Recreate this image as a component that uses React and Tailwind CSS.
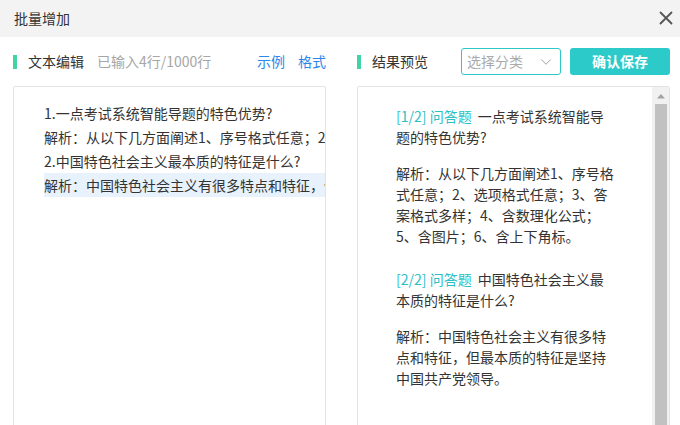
import { ChevronDown } from 'lucide-react';

const font = { fontFamily: '"Noto Sans CJK SC", "Microsoft YaHei", sans-serif' };

const leftLines = [
    '1.一点考试系统智能导题的特色优势?',
    '解析：从以下几方面阐述1、序号格式任意；2、选项格式任意；3、答案格式多样；4、含数理化公式；',
    '2.中国特色社会主义最本质的特征是什么?',
    '解析：中国特色社会主义有很多特点和特征，但最本质的特征是坚持中国共产党领导。',
];

const preview = [
    {
        tag: '[1/2] 问答题',
        title: '一点考试系统智能导题的特色优势?',
        answer: '解析：从以下几方面阐述1、序号格式任意；2、选项格式任意；3、答案格式多样；4、含数理化公式；5、含图片；6、含上下角标。',
    },
    {
        tag: '[2/2] 问答题',
        title: '中国特色社会主义最本质的特征是什么?',
        answer: '解析：中国特色社会主义有很多特点和特征，但最本质的特征是坚持中国共产党领导。',
    },
];

function SectionTitle({ children }) {
    return (
        <div className="flex items-center">
            <span className="h-[14px] w-[4px] bg-[#3fd3a6]" />
            <span className="ml-[11px] text-[14px] text-[#333]">{children}</span>
        </div>
    );
}

export default function App() {
    return (
        <div className="h-[425px] w-[680px] overflow-hidden bg-white" style={font}>
            <div className="flex h-[37px] items-center justify-between bg-[#f3f3f3] pl-[14px] pr-[7px]">
                <span className="text-[14px] text-[#333]">批量增加</span>
                <svg width="14" height="14" viewBox="0 0 14 14" className="mt-[-1px]">
                    <path d="M1.5 1.5 L12.5 12.5 M12.5 1.5 L1.5 12.5" stroke="#555" strokeWidth="1.8" strokeLinecap="round" />
                </svg>
            </div>

            <div className="flex gap-[31px] pl-[13px]">
                <div className="w-[313px]">
                    <div className="mt-[11px] flex h-[27px] items-center">
                        <SectionTitle>文本编辑</SectionTitle>
                        <span className="ml-[13px] text-[14px] text-[#a6a6a6]">已输入4行/1000行</span>
                        <span className="ml-auto text-[14px] text-[#2b87e8]">示例</span>
                        <span className="ml-[13px] text-[14px] text-[#2b87e8]">格式</span>
                    </div>
                    <div className="mt-[11px] h-[360px] overflow-hidden rounded-[2px] border border-[#e3e3e3] pl-[30px] pt-[14px]">
                        {leftLines.map((line, i) => (
                            <div
                                key={i}
                                className={`h-[24px] overflow-hidden whitespace-nowrap text-[14px] leading-[24px] text-[#333] ${i === 3 ? 'bg-[#e8f2fd]' : ''}`}
                            >
                                {line}
                            </div>
                        ))}
                    </div>
                </div>

                <div className="w-[313px]">
                    <div className="mt-[11px] flex h-[27px] items-center">
                        <SectionTitle>结果预览</SectionTitle>
                        <div className="ml-[33px] flex h-[27px] w-[100px] items-center justify-between rounded-[3px] border border-[#2cc8c6] pl-[5px] pr-[5px]">
                            <span className="text-[14px] text-[#aaa]">选择分类</span>
                            <ChevronDown size={18} strokeWidth={1.2} color="#999" />
                        </div>
                        <button className="ml-auto h-[27px] w-[100px] rounded-[3px] bg-[#2ccac8] text-[14px] font-bold text-white">
                            确认保存
                        </button>
                    </div>
                    <div className="mt-[11px] flex h-[360px] overflow-hidden rounded-[2px] border border-[#e3e3e3]">
                        <div className="flex-1 pl-[38px] pt-[19px]">
                            {preview.map((q, i) => (
                                <div key={i} className={`w-[219px] text-[14px] leading-[21px] text-[#333] ${i > 0 ? 'mt-[22px]' : ''}`}>
                                    <p>
                                        <span className="mr-[3px] text-[#2cc0c6]">{q.tag}</span> {q.title}
                                    </p>
                                    <p className="mt-[15px]">{q.answer}</p>
                                </div>
                            ))}
                        </div>
                        <div className="flex w-[17px] flex-col items-center bg-[#f1f1f1]">
                            <svg width="10" height="6" viewBox="0 0 10 6" className="mt-[6px]">
                                <path d="M1 5.5 L5 1 L9 5.5 Z" fill="#a3a3a3" />
                            </svg>
                            <div className="mt-[5px] w-[12px] flex-1 bg-[#c1c1c1]" />
                        </div>
                    </div>
                </div>
            </div>
        </div>
    );
}
